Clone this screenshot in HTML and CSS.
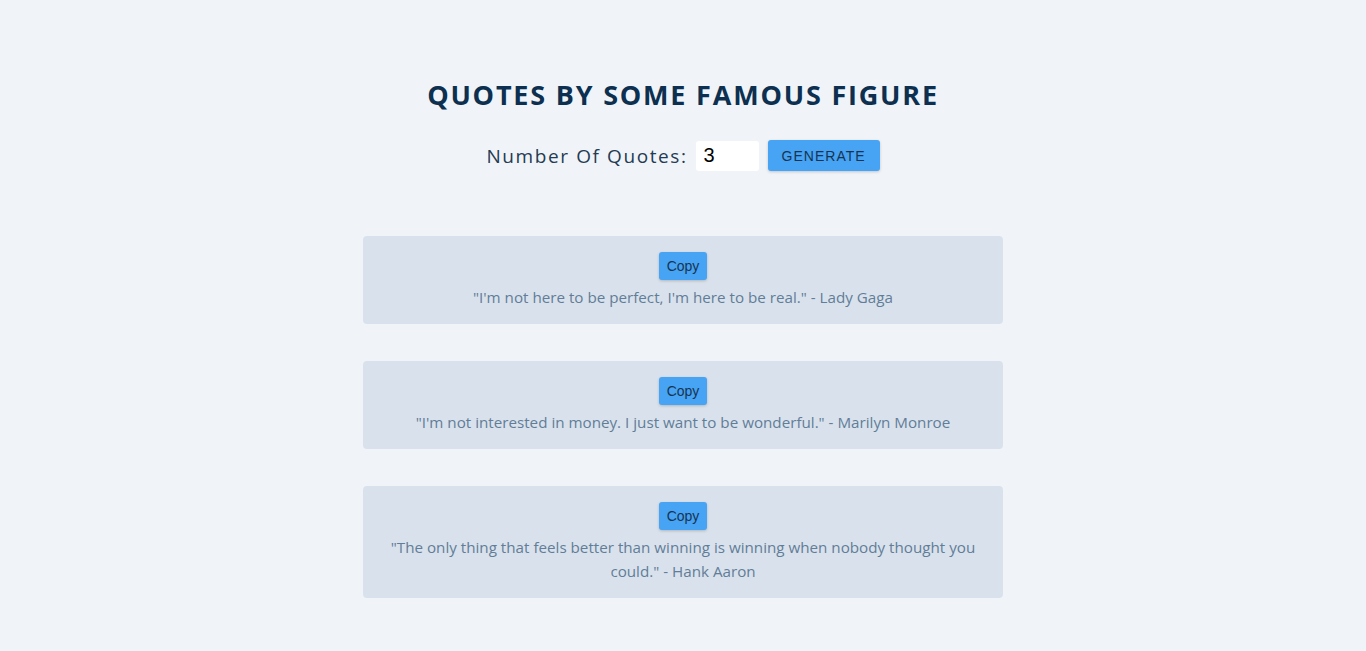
FILE: index.html
```html
<!DOCTYPE html>
<html>
<head>
<meta charset="utf-8">
<link rel="stylesheet" href="styles.css">
</head>
<body>
<main class="app">
  <h1 class="title">QUOTES BY SOME FAMOUS FIGURE</h1>
  <form class="controls">
    <label class="label" for="count">Number Of Quotes:</label>
    <input class="count" id="count" type="number" value="3">
    <button class="generate" type="button">GENERATE</button>
  </form>
  <section class="quotes">
    <article class="card">
      <button class="copy" type="button">Copy</button>
      <p class="quote">"I'm not here to be perfect, I'm here to be real." - Lady Gaga</p>
    </article>
    <article class="card">
      <button class="copy" type="button">Copy</button>
      <p class="quote">"I'm not interested in money. I just want to be wonderful." - Marilyn Monroe</p>
    </article>
    <article class="card">
      <button class="copy" type="button">Copy</button>
      <p class="quote">"The only thing that feels better than winning is winning when nobody thought you could." - Hank Aaron</p>
    </article>
  </section>
</main>
</body>
</html>
```

FILE: styles.css
```css
html, body {
  margin: 0;
  padding: 0;
}
body {
  background: #f0f4f8;
  font-family: "Open Sans", "Noto Sans", sans-serif;
  min-height: 651px;
}
.app {
  display: flex;
  flex-direction: column;
  align-items: center;
  padding-top: 77px;
}
.title {
  margin: 0;
  font-size: 27px;
  font-weight: 700;
  letter-spacing: 1.8px;
  color: #0d3050;
  line-height: 36px;
}
.controls {
  display: flex;
  align-items: center;
  margin-top: 27px;
  gap: 9px;
}
.label {
  font-size: 19px;
  letter-spacing: 1.6px;
  color: #243b53;
  margin-right: -1px;
}
.count {
  width: 63px;
  height: 30px;
  box-sizing: border-box;
  border: none;
  border-radius: 3px;
  background: #fff;
  font-family: "Liberation Sans", Arial, sans-serif;
  font-size: 20px;
  padding: 0 8px;
  color: #000;
  -moz-appearance: textfield;
}
.count::-webkit-inner-spin-button,
.count::-webkit-outer-spin-button {
  -webkit-appearance: none;
  margin: 0;
}
.generate {
  width: 112px;
  height: 31px;
  border: none;
  border-radius: 3px;
  background: #47a3f3;
  color: #163452;
  font-family: "Liberation Sans", Arial, sans-serif;
  font-size: 14px;
  letter-spacing: 1px;
  box-shadow: 0 1px 3px rgba(0, 0, 0, 0.2);
  cursor: pointer;
}
.quotes {
  display: flex;
  flex-direction: column;
  gap: 37px;
  margin-top: 65px;
  width: 640px;
}
.card {
  background: #d9e2ec;
  border-radius: 4px;
  padding: 16px 20px 15px;
  display: flex;
  flex-direction: column;
  align-items: center;
}
.copy {
  width: 48px;
  height: 28px;
  border: none;
  border-radius: 3px;
  background: #47a3f3;
  color: #163452;
  font-family: "Liberation Sans", Arial, sans-serif;
  font-size: 14px;
  padding: 0;
  box-shadow: 0 1px 3px rgba(0, 0, 0, 0.2);
  cursor: pointer;
}
.quote {
  margin: 5px 0 0;
  font-size: 15.2px;
  line-height: 24px;
  color: #627d98;
  text-align: center;
}
```
